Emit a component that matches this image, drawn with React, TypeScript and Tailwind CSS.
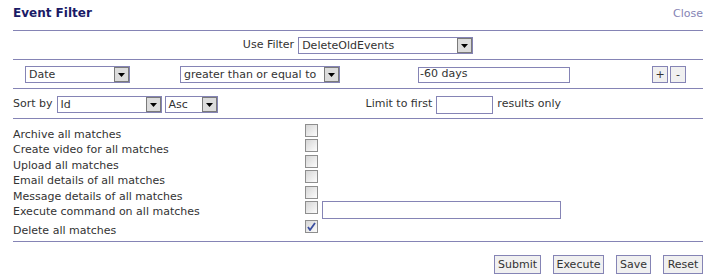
import React from 'react';

function Select({ value, className }: { value: string; className: string }) {
  return (
    <div className={`flex h-[17px] items-center border border-[#8584b5] bg-white ${className}`}>
      <span className="flex-1 truncate pl-[3px] leading-none">{value}</span>
      <span className="flex h-[15px] w-[15px] items-center justify-center border border-[#7a7a7a] bg-[#dcdcdc]">
        <svg width="7" height="4" viewBox="0 0 7 4">
          <path d="M0 0h7L3.5 4z" fill="#000" />
        </svg>
      </span>
    </div>
  );
}

function Checkbox({ checked = false }: { checked?: boolean }) {
  return (
    <div className="flex h-[13px] w-[13px] items-center justify-center border border-[#8e8e8e] bg-gradient-to-br from-[#d6d6d6] to-[#fcfcfc]">
      {checked && (
        <svg width="9" height="9" viewBox="0 0 9 9">
          <path d="M1 5l2 3 5-7" stroke="#3b4fa0" strokeWidth="1.8" fill="none" />
        </svg>
      )}
    </div>
  );
}

function Button({ label, className }: { label: string; className: string }) {
  return (
    <button className={`h-[19px] border border-[#8584b5] bg-[#f0f0f0] leading-none text-[#333] ${className}`}>
      {label}
    </button>
  );
}

const actions = [
  { label: 'Archive all matches', h: 'h-[15px]' },
  { label: 'Create video for all matches', h: 'h-[16px]' },
  { label: 'Upload all matches', h: 'h-[15px]' },
  { label: 'Email details of all matches', h: 'h-[16px]' },
  { label: 'Message details of all matches', h: 'h-[15px]' },
  { label: 'Execute command on all matches', h: 'h-[19px]', input: true },
  { label: 'Delete all matches', h: 'h-[15px]', checked: true },
];

export default function App() {
  return (
    <div className="h-[280px] w-[717px] bg-white pl-[13px] pr-[14px] text-[11px] text-[#333] [font-family:'DejaVu_Sans',Verdana,sans-serif]">
      {/* header */}
      <div className="flex h-[31px] items-start justify-between border-b border-[#8584b5] pt-[4px]">
        <h1 className="text-[12px] font-bold text-[#1a1a66]">Event Filter</h1>
        <a className="pt-[2px] text-[#8584b5]">Close</a>
      </div>

      {/* use filter */}
      <div className="flex h-[29px] items-center justify-center gap-[4px] border-b border-[#8584b5] pt-[1px]">
        <span>Use Filter</span>
        <Select value="DeleteOldEvents" className="w-[175px]" />
      </div>

      {/* term row */}
      <div className="flex h-[29px] items-center border-b border-[#8584b5] pt-[1px]">
        <Select value="Date" className="ml-[12px] w-[105px]" />
        <Select value="greater than or equal to" className="ml-[50px] w-[160px]" />
        <div className="ml-[78px] flex h-[16px] w-[152px] items-center border border-[#8584b5] pl-[1px]">-60 days</div>
        <div className="ml-[82px] flex gap-[2px]">
          <button className="flex h-[17px] w-[16px] items-center justify-center border border-[#8584b5] bg-[#f0f0f0] leading-none">+</button>
          <button className="flex h-[17px] w-[16px] items-center justify-center border border-[#8584b5] bg-[#f0f0f0] leading-none">-</button>
        </div>
      </div>

      {/* sort row */}
      <div className="flex h-[30px] items-center border-b border-[#8584b5] pt-[2px]">
        <span>Sort by</span>
        <Select value="Id" className="ml-[4px] w-[105px]" />
        <Select value="Asc" className="ml-[3px] w-[53px]" />
        <span className="ml-[148px]">Limit to first</span>
        <div className="ml-[4px] h-[18px] w-[57px] border border-[#8584b5]" />
        <span className="ml-[4px]">results only</span>
      </div>

      {/* actions */}
      <div className="flex flex-col border-b border-[#8584b5] pb-[6px] pt-[5px]">
        {actions.map((a) => (
          <div key={a.label} className={`flex items-start ${a.h}`}>
            <span className="mt-[4px] w-[292px] leading-[13px]">{a.label}</span>
            <Checkbox checked={a.checked} />
            {a.input && <div className="ml-[4px] h-[18px] w-[239px] border border-[#8584b5]" />}
          </div>
        ))}
      </div>

      {/* buttons */}
      <div className="flex justify-end gap-[12px] pt-[13px]">
        <Button label="Submit" className="w-[47px]" />
        <Button label="Execute" className="w-[51px]" />
        <Button label="Save" className="w-[35px]" />
        <Button label="Reset" className="w-[40px]" />
      </div>
    </div>
  );
}
